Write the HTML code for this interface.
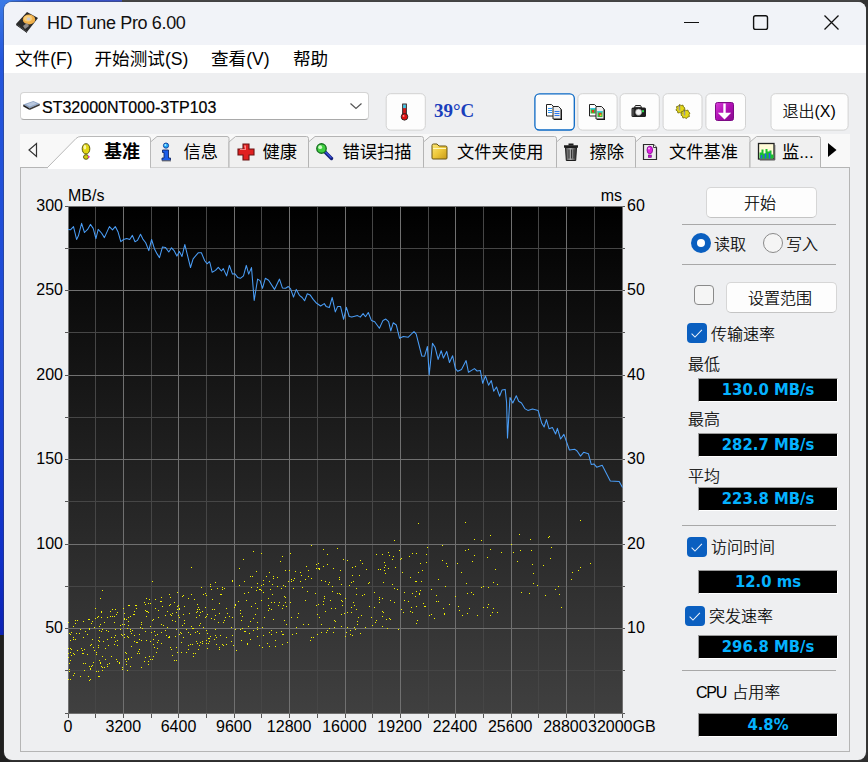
<!DOCTYPE html>
<html lang="zh-CN">
<head>
<meta charset="utf-8">
<title>HD Tune Pro 6.00</title>
<style>
*{box-sizing:border-box;margin:0;padding:0}
html,body{width:868px;height:762px;overflow:hidden}
body{position:relative;background:#2b2b2b;font-family:"Liberation Sans","Noto Sans CJK SC",sans-serif;color:#000;font-size:16px;line-height:1}
.abs{position:absolute}
.desk-top{left:0;top:0;width:868px;height:6px;background:#454545}
.desk-blue-top{left:0;top:0;width:122px;height:8px;background:linear-gradient(90deg,#3f86ea 0,#2f58d6 30px,#3a4fc0 122px)}
.desk-blue-left{left:0;top:0;width:10px;height:635px;background:linear-gradient(180deg,#3b7be6 0,#2456dc 60px,#1d49d6 320px,#1030c8 560px,#0c22b4 634px)}
.desk-dark-left{left:0;top:635px;width:10px;height:127px;background:#1f1f1f}
.desk-right{left:860px;top:0;width:8px;height:762px;background:#333}
.desk-bottom{left:0;top:752px;width:868px;height:10px;background:#2e2e2e}
.win{left:4px;top:2px;width:862px;height:758px;border-radius:8px;background:#eeeff1;overflow:hidden;box-shadow:0 0 0 1px rgba(60,60,60,.35)}
.titlebar{left:0;top:0;width:862px;height:43px;background:#f1f3f8}
.title{left:43px;top:12px;font-size:18px;letter-spacing:-0.35px;white-space:nowrap;color:#111}
.menubar{left:0;top:43px;width:862px;height:28px;background:#fff}
.menu{top:49px;font-size:17.6px;white-space:nowrap}
.t16{font-size:16px;white-space:nowrap;font-weight:300;-webkit-text-stroke:.22px #000}
.combo{left:16px;top:90px;width:349px;height:28px;background:#fff;border:1px solid #d4d4d4;border-bottom-color:#a9a9a9;border-radius:4px}
.btn{background:#fdfdfd;border:1px solid #d6d6d6;border-bottom-color:#c4c4c4;border-radius:5px}
.btn.focus{border:1px solid #0a68c4;box-shadow:inset 0 0 0 .5px #0a68c4}
.temp{left:430px;top:99px;font-family:"Liberation Serif",serif;font-weight:bold;font-size:19px;color:#1a3ebc;white-space:nowrap}
.tabstrip{left:16px;top:132px;width:830px;height:33px;background:#f8f8f8}
.tab{top:135px;height:30px;background:#f0f0f0;border:1px solid #c9c9c9;border-bottom:none;border-radius:5px 5px 0 0}
.tablabel{top:141.500px;font-size:17.300px;white-space:nowrap}
.panel{left:16px;top:165px;width:830px;height:585px;border:1px solid #b5b5b5;background:#eeeff1}
.sep{left:678px;width:154px;height:1px;background:#a8a8a8}
.box{left:694px;width:140px;height:24px;background:#000;border:1px solid #9a9a9a;border-right-color:#fff;border-bottom-color:#fff;color:#05b2ff;font-family:"DejaVu Sans Condensed","DejaVu Sans","Liberation Sans",sans-serif;font-stretch:condensed;font-weight:bold;font-size:16.5px;text-align:center;line-height:22px;letter-spacing:0;white-space:nowrap}
.cb{width:20px;height:20px;border-radius:4px;background:#0a5fc0}
.cb svg{position:absolute;left:0;top:0}
.cb.off{background:#f5f5f5;border:1px solid #8a8a8a}
.radio{width:20px;height:20px;border-radius:50%}
.radio.on{background:#0a5fc0}
.radio.on::after{content:"";position:absolute;left:6px;top:6px;width:8px;height:8px;border-radius:50%;background:#fff}
.radio.off{background:#f5f5f5;border:1px solid #8a8a8a}
.chart{position:absolute;left:-4px;top:-2px}
</style>
</head>
<body>
<div class="abs desk-top"></div>
<div class="abs desk-right"></div>
<div class="abs desk-bottom"></div>
<div class="abs desk-blue-top"></div>
<div class="abs desk-blue-left"></div>
<div class="abs desk-dark-left"></div>

<div class="abs win">
  <div class="abs titlebar"></div>
  <!-- app icon -->
  <svg class="abs" style="left:11px;top:9px" width="24" height="22" viewBox="0 0 24 22">
    <polygon points="1,13 12,1 23,7 12,21" fill="#2a2a2a"/>
    <polygon points="1,13 12,21 12,22 1,14" fill="#111"/>
    <ellipse cx="14" cy="8.5" rx="6.2" ry="5" fill="#f0b04a"/>
    <ellipse cx="13" cy="7.5" rx="4" ry="3" fill="#f8cf7c"/>
    <ellipse cx="13.5" cy="8" rx="1.8" ry="1.4" fill="#c9c9d4"/>
    <polygon points="8,15 12,12 14,15 10,18" fill="#8e8a88"/>
  </svg>
  <div class="abs title">HD Tune Pro 6.00</div>
  <!-- caption buttons -->
  <svg class="abs" style="left:676px;top:10px" width="170" height="24" viewBox="0 0 170 24">
    <path d="M4 10.5H19" stroke="#111" stroke-width="1.2" fill="none"/>
    <rect x="73.600" y="3.700" width="13.900" height="13.700" rx="2" fill="none" stroke="#111" stroke-width="1.400"/>
    <path d="M144.5 3.5L158.5 17.5M158.5 3.5L144.5 17.5" stroke="#111" stroke-width="1.3" fill="none"/>
  </svg>

  <div class="abs menubar"></div>
  <div class="abs menu" style="left:11px">文件(F)</div>
  <div class="abs menu" style="left:90.5px">开始测试(S)</div>
  <div class="abs menu" style="left:207px">查看(V)</div>
  <div class="abs menu" style="left:289px">帮助</div>

  <!-- combobox -->
  <div class="abs combo"></div>
  <svg class="abs" style="left:18px;top:98px" width="19" height="11" viewBox="0 0 20 12">
    <polygon points="1,5 12,1 19,4 8,9" fill="#8fa4c4"/>
    <polygon points="1,5 8,9 8,11 1,7" fill="#222"/>
    <polygon points="8,9 19,4 19,6 8,11" fill="#3a3a3a"/>
    <polygon points="4,5 12,2 16,4 8,7" fill="#b9c8de"/>
  </svg>
  <div class="abs t16" style="left:38px;top:97.5px">ST32000NT000-3TP103</div>
  <svg class="abs" style="left:344px;top:99px" width="16" height="10" viewBox="0 0 16 10"><path d="M2.500 2.500L8 7.500L13.500 2.500" stroke="#555" stroke-width="1.2" fill="none"/></svg>

  <svg class="chart" width="868" height="762" viewBox="0 0 868 762">
<rect x="386.2" y="93.7" width="39.1" height="36.4" rx="4.5" fill="#fdfdfd" stroke="#d2d2d2" stroke-width="1"/>
<rect x="534.9" y="93.8" width="39.4" height="36.2" rx="4.5" fill="#fdfdfd" stroke="#0a68c4" stroke-width="1.3"/>
<rect x="577.9" y="93.7" width="39.2" height="36.4" rx="4.5" fill="#fdfdfd" stroke="#d2d2d2" stroke-width="1"/>
<rect x="620.1" y="93.7" width="39.2" height="36.4" rx="4.5" fill="#fdfdfd" stroke="#d2d2d2" stroke-width="1"/>
<rect x="663.1" y="93.7" width="38.9" height="36.4" rx="4.5" fill="#fdfdfd" stroke="#d2d2d2" stroke-width="1"/>
<rect x="705.9" y="93.7" width="39.6" height="36.4" rx="4.5" fill="#fdfdfd" stroke="#d2d2d2" stroke-width="1"/>
<rect x="771.0" y="93.7" width="77.1" height="36.4" rx="4.5" fill="#fdfdfd" stroke="#d2d2d2" stroke-width="1"/>
</svg>
  <!-- thermometer button -->
  <svg class="abs" style="left:395px;top:100.5px" width="11" height="18.5" viewBox="0 0 12 20">
    <rect x="4" y="1" width="4" height="13" fill="#d01818" stroke="#222" stroke-width="1"/>
    <rect x="4.5" y="1.5" width="3" height="4" fill="#3cc8e8"/>
    <circle cx="6" cy="15" r="3.6" fill="#e01010" stroke="#222" stroke-width="1"/>
    <circle cx="5" cy="14" r="1" fill="#ff9a9a"/>
  </svg>
  <div class="abs temp">39°C</div>

  <!-- toolbar buttons -->
  <div class="abs t16" style="left:778.5px;top:102px">退出<span style="-webkit-text-stroke:0">(X)</span></div>
  <!-- copy text icon -->
  <svg class="abs" style="left:541px;top:101px" width="18" height="18" viewBox="0 0 18 18">
    <path d="M9.500 4.500h5l2.500 2.500v10h-8z" fill="#111"/>
    <path d="M1.500 1.500h5l2 2v9.500h-7z" fill="#fff" stroke="#222" stroke-width="1"/>
    <path d="M3 5.500h4M3 7.500h4M3 9.500h4" stroke="#2a94f4" stroke-width="1.200"/>
    <path d="M8 3.500h5.500l2.500 2.500v10h-8z" fill="#ececec" stroke="#222" stroke-width="1"/>
    <path d="M9.500 8.500h5M9.500 10.500h5M9.500 12.500h5" stroke="#2a78f0" stroke-width="1.200"/>
  </svg>
  <!-- copy image icon -->
  <svg class="abs" style="left:584px;top:101px" width="18" height="18" viewBox="0 0 18 18">
    <path d="M9.500 4.500h5l2.500 2.500v10h-8z" fill="#111"/>
    <path d="M1.500 1.500h5l2 2v9.500h-7z" fill="#fff" stroke="#222" stroke-width="1"/>
    <rect x="2.500" y="5" width="5" height="5.500" fill="#38b838"/>
    <rect x="2.500" y="5" width="5" height="1.500" fill="#38c8e8"/>
    <rect x="4" y="7" width="2" height="2.500" fill="#e83020"/>
    <path d="M8 3.500h5.500l2.500 2.500v10h-8z" fill="#ececec" stroke="#222" stroke-width="1"/>
    <rect x="9.500" y="8" width="5" height="6" fill="#38b838"/>
    <rect x="9.500" y="8" width="5" height="1.500" fill="#38c8e8"/>
    <rect x="11" y="10" width="2.200" height="2.500" fill="#e83020"/>
    <rect x="12" y="11.500" width="1.500" height="1.500" fill="#e8d820"/>
  </svg>
  <!-- camera icon -->
  <svg class="abs" style="left:627px;top:102px" width="16" height="14" viewBox="0 0 16 14">
    <path d="M4.500 1.500h5l1.200 2.200h-7.400z" fill="#e8e8e8" stroke="#222" stroke-width="1"/>
    <rect x=".5" y="3.500" width="14.500" height="9.500" rx="1.500" fill="#1f1f1f"/>
    <rect x="1" y="5" width="2.200" height="7" fill="#444"/>
    <circle cx="7.600" cy="8.200" r="3.100" fill="#f4f4f4"/>
    <circle cx="7.600" cy="8.200" r="3.100" fill="none" stroke="#888" stroke-width=".6"/>
    <rect x="11" y="6.200" width="2" height="2" fill="#28d848"/>
  </svg>
  <!-- options icon -->
  <svg class="abs" style="left:669px;top:101px" width="18" height="17" viewBox="0 0 18 17">
    <g fill="#e4d812" stroke="#7a7410" stroke-width=".9">
      <path d="M6.500 1.500l1.600 1 1.900-.4.400 1.900 1.600 1-1 1.700.4 1.900-1.900.4-1 1.600-1.700-1-1.900.4-.4-1.900-1.600-1 1-1.600-.4-1.900 1.900-.4z"/>
      <path d="M11.500 6.500l1.600 1 1.900-.4.400 1.900 1.600 1-1 1.700.4 1.900-1.900.4-1 1.600-1.700-1-1.900.4-.4-1.900-1.600-1 1-1.600-.4-1.900 1.900-.4z"/>
    </g>
    <path d="M6.500 2.500v5" stroke="#9a9a9a" stroke-width="1.600"/>
    <path d="M11.500 7.500v5" stroke="#9a9a9a" stroke-width="1.600"/>
    <path d="M6.500 2v1.500M11.500 7v1.500" stroke="#555" stroke-width=".8"/>
  </svg>
  <!-- download icon -->
  <svg class="abs" style="left:711px;top:100px" width="19" height="19" viewBox="0 0 19 19">
    <defs><linearGradient id="pg" x1="0" y1="0" x2="1" y2="1"><stop offset="0" stop-color="#d83cd8"/><stop offset=".5" stop-color="#b010b4"/><stop offset="1" stop-color="#86088c"/></linearGradient></defs>
    <rect x=".5" y=".5" width="18" height="18" rx="2" fill="url(#pg)" stroke="#7c0a84"/>
    <path d="M9.500 1.500v10" stroke="#fff" stroke-width="2.400" fill="none"/>
    <path d="M2.800 10.800h13.400l-6.700 6.700z" fill="#fff"/>
  </svg>

  <!-- tab strip -->
  <div class="abs tabstrip"></div>
  <svg class="abs" style="left:21.5px;top:139px" width="14" height="18" viewBox="0 0 14 18"><path d="M10.5 2.5v13l-7.5-6.5z" fill="none" stroke="#333" stroke-width="1.2"/></svg>
  <svg class="abs" style="left:821px;top:139px" width="14" height="18" viewBox="0 0 14 18"><path d="M3 2v14l8.5-7z" fill="#000"/></svg>


  <div class="abs panel"></div>
  <svg class="chart" width="868" height="762" viewBox="0 0 868 762">
<path d="M150.5 167.5V142L157.0 136.5H227Q229 136.5 229 138.5V167.5" fill="#f0f0f0" stroke="#b4b4b4" stroke-width="1"/>
<path d="M229 167.5V142L235.5 136.5H306.5Q308.5 136.5 308.5 138.5V167.5" fill="#f0f0f0" stroke="#b4b4b4" stroke-width="1"/>
<path d="M308.5 167.5V142L315.0 136.5H421.5Q423.5 136.5 423.5 138.5V167.5" fill="#f0f0f0" stroke="#b4b4b4" stroke-width="1"/>
<path d="M423.5 167.5V142L430.0 136.5H554.5Q556.5 136.5 556.5 138.5V167.5" fill="#f0f0f0" stroke="#b4b4b4" stroke-width="1"/>
<path d="M556.5 167.5V142L563.0 136.5H633.5Q635.5 136.5 635.5 138.5V167.5" fill="#f0f0f0" stroke="#b4b4b4" stroke-width="1"/>
<path d="M635.5 167.5V142L642.0 136.5H748Q750 136.5 750 138.5V167.5" fill="#f0f0f0" stroke="#b4b4b4" stroke-width="1"/>
<path d="M750 167.5V142L756.5 136.5H818.5Q820.5 136.5 820.5 138.5V167.5" fill="#f0f0f0" stroke="#b4b4b4" stroke-width="1"/>
<path d="M44 167.500H47.500L76 138.500Q78 136.500 81 136.500H148Q150.500 136.500 150.500 139V167.500" fill="#fff" stroke="#b9b9b9" stroke-width="1"/>
<rect x="48" y="167" width="102" height="2" fill="#fff"/>
</svg>

  <!-- tab icons -->
  <svg class="abs" style="left:77px;top:141px" width="12" height="17" viewBox="0 0 12 17">
    <path d="M5 .7C7.500 .7 8.800 3 8.800 5.800C8.800 8.400 7.500 11 5 11C2.500 11 1.200 8.400 1.200 5.800C1.200 3 2.500 .7 5 .7z" fill="#e2d614" stroke="#5e5a10" stroke-width="1"/>
    <ellipse cx="3.900" cy="4.200" rx="1.300" ry="2.200" fill="#fbf8a8"/>
    <ellipse cx="5" cy="14" rx="2.500" ry="2.300" fill="#d8cc14" stroke="#5e5a10" stroke-width="1"/>
    <rect x="7" y="13" width="1.600" height="1.600" fill="#e828c8"/>
  </svg>
  <svg class="abs" style="left:156px;top:140px" width="12" height="20" viewBox="0 0 12 20">
    <circle cx="6" cy="3.600" r="2.600" fill="#20a8f8" stroke="#123a9a" stroke-width=".9"/>
    <circle cx="5.400" cy="3" r="1" fill="#a8ecff"/>
    <path d="M2.500 8h6v8h2v2.500h-8.500v-2.500h2v-5.500h-1.500z" fill="#1e5ee8" stroke="#142a6a" stroke-width=".9"/>
    <path d="M2 19h9" stroke="#8a8a8a" stroke-width="1"/>
  </svg>
  <svg class="abs" style="left:233px;top:141px" width="18" height="18" viewBox="0 0 18 18">
    <path d="M6 1h6v5h5v6h-5v5h-6v-5h-5v-6h5z" fill="#e02020" stroke="#6a1414" stroke-width="1.100"/>
    <path d="M7 2.500h2v4.500h-6v-1h5z" fill="#ff9a9a" opacity=".85"/>
  </svg>
  <svg class="abs" style="left:311px;top:140px" width="20" height="20" viewBox="0 0 20 20">
    <path d="M9.500 9.500L16.500 16.500" stroke="#14207a" stroke-width="3.400" stroke-linecap="round"/>
    <path d="M9.500 9L16 15.500" stroke="#3a50e0" stroke-width="1.200" stroke-linecap="round"/>
    <circle cx="6.500" cy="6.500" r="4.700" fill="#40d040" stroke="#14701e" stroke-width="1.400"/>
    <circle cx="5.200" cy="5.200" r="1.900" fill="#d0fcc8"/>
  </svg>
  <svg class="abs" style="left:427px;top:141px" width="17" height="17" viewBox="0 0 17 17">
    <defs><linearGradient id="fg" x1="0" y1="0" x2="1" y2="1"><stop offset="0" stop-color="#fbe87a"/><stop offset=".5" stop-color="#eec83a"/><stop offset="1" stop-color="#c89a18"/></linearGradient></defs>
    <path d="M1 2.500Q1 1 2.500 1H6L8 3H14.500Q16 3 16 4.500V15Q16 16 15 16H2Q1 16 1 15z" fill="url(#fg)" stroke="#6a5410" stroke-width="1"/>
    <path d="M2 5.500H15" stroke="#fff6b8" stroke-width="1.200"/>
  </svg>
  <svg class="abs" style="left:559px;top:140px" width="16" height="20" viewBox="0 0 16 20">
    <defs><linearGradient id="tg" x1="0" y1="0" x2="1" y2="0"><stop offset="0" stop-color="#4a4a4a"/><stop offset=".45" stop-color="#a8a8a8"/><stop offset="1" stop-color="#2e2e2e"/></linearGradient></defs>
    <path d="M2.500 5.500h11l-.8 13h-9.400z" fill="url(#tg)" stroke="#1c1c1c" stroke-width="1"/>
    <path d="M1 4.500h14" stroke="#1c1c1c" stroke-width="2.400"/>
    <path d="M5.500 2.500h5" stroke="#1c1c1c" stroke-width="1.800"/>
    <path d="M6 7.500v9M8.500 7.500v9M11 7.500v9" stroke="#2a2a2a" stroke-width=".9"/>
  </svg>
  <svg class="abs" style="left:638px;top:141px" width="18" height="18" viewBox="0 0 18 18">
    <path d="M1.500 1.500h10l3 3v12h-13z" fill="#ececec" stroke="#2a2a2a" stroke-width="1.200"/>
    <path d="M11.500 1.500v3h3" fill="#fff" stroke="#2a2a2a" stroke-width=".9"/>
    <ellipse cx="7.800" cy="7" rx="2.800" ry="3.800" fill="#e020e0" stroke="#7a0a8a" stroke-width=".8"/>
    <circle cx="7" cy="5.600" r="1" fill="#fbb8fb"/>
    <rect x="6.300" y="12" width="3" height="2.400" fill="#c010c8" stroke="#7a0a8a" stroke-width=".6"/>
  </svg>
  <svg class="abs" style="left:753px;top:140px" width="20" height="20" viewBox="0 0 20 20">
    <rect x="1.500" y="1.500" width="15.500" height="15.500" fill="#fffbd8" stroke="#222" stroke-width="1.300"/>
    <path d="M3.500 16.500v-6M5.500 16.500v-9M7.500 16.500v-5M9.500 16.500v-9.500M11.500 16.500v-7M13.500 16.500v-8M15.500 16.500v-4" stroke="#18c030" stroke-width="2"/>
    <path d="M4.500 16.500v-3.500M8.500 16.500v-5M12.500 16.500v-5.500" stroke="#2a58f0" stroke-width="1.600"/>
    <path d="M17.800 3v15h-15" stroke="#555" stroke-width="1" fill="none"/>
  </svg>

  <!-- tab labels -->
  <div class="abs tablabel" style="left:100px;top:141px;font-size:18px;font-weight:bold">基准</div>
  <div class="abs tablabel" style="left:179.5px">信息</div>
  <div class="abs tablabel" style="left:258.5px">健康</div>
  <div class="abs tablabel" style="left:338.5px">错误扫描</div>
  <div class="abs tablabel" style="left:453px">文件夹使用</div>
  <div class="abs tablabel" style="left:585.5px">擦除</div>
  <div class="abs tablabel" style="left:665px">文件基准</div>
  <div class="abs tablabel" style="left:778px">监...</div>

  <svg class="chart" width="868" height="762" viewBox="0 0 868 762">
<defs><linearGradient id="bg" x1="0" y1="0" x2="0" y2="1"><stop offset="0" stop-color="#000"/><stop offset="1" stop-color="#404040"/></linearGradient></defs>
<rect x="68" y="206" width="555" height="508" fill="url(#bg)"/>
<path d="M95.5 206V714M151.5 206V714M206.5 206V714M261.5 206V714M317.5 206V714M372.5 206V714M428.5 206V714M483.5 206V714M538.5 206V714M594.5 206V714M68 248.5H623M68 332.5H623M68 417.5H623M68 501.5H623M68 586.5H623M68 670.5H623" stroke="#464646" stroke-width="1" fill="none" shape-rendering="crispEdges"/>
<path d="M68.5 206V714M123.5 206V714M178.5 206V714M234.5 206V714M289.5 206V714M345.5 206V714M400.5 206V714M455.5 206V714M511.5 206V714M566.5 206V714M622.5 206V714M68 206.5H623M68 290.5H623M68 375.5H623M68 459.5H623M68 544.5H623M68 628.5H623M68 713.5H623" stroke="#707070" stroke-width="1" fill="none" shape-rendering="crispEdges"/>
<path d="M65 206.5H68M623 206.5H625M65 248.5H68M623 248.5H625M65 290.5H68M623 290.5H625M65 332.5H68M623 332.5H625M65 375.5H68M623 375.5H625M65 417.5H68M623 417.5H625M65 459.5H68M623 459.5H625M65 501.5H68M623 501.5H625M65 544.5H68M623 544.5H625M65 586.5H68M623 586.5H625M65 628.5H68M623 628.5H625M65 670.5H68M623 670.5H625M65 713.5H68M623 713.5H625M68.5 714V718M95.5 714V718M123.5 714V718M151.5 714V718M178.5 714V718M206.5 714V718M234.5 714V718M261.5 714V718M289.5 714V718M317.5 714V718M345.5 714V718M372.5 714V718M400.5 714V718M428.5 714V718M455.5 714V718M483.5 714V718M511.5 714V718M538.5 714V718M566.5 714V718M594.5 714V718M622.5 714V718" stroke="#555" stroke-width="1" fill="none" shape-rendering="crispEdges"/>
<path d="M247 644.5h1M364 594.5h1M88 676.5h1M136 605.5h1M387 628.5h1M147 611.5h1M168 637.5h1M371 617.5h1M242 628.5h1M203 594.5h1M152 620.5h1M389 555.5h1M101 611.5h1M80 676.5h1M100 662.5h1M112 616.5h1M222 589.5h1M165 630.5h1M394 540.5h1M272 594.5h1M442 560.5h1M285 597.5h1M102 667.5h1M256 571.5h1M124 613.5h1M408 601.5h1M269 572.5h1M326 632.5h1M257 636.5h1M360 633.5h1M212 599.5h1M250 576.5h1M193 656.5h1M83 637.5h1M190 644.5h1M114 622.5h1M469 608.5h1M262 647.5h1M207 614.5h1M211 589.5h1M263 580.5h1M345 636.5h1M311 545.5h1M163 625.5h1M248 592.5h1M126 653.5h1M318 568.5h1M533 573.5h1M108 631.5h1M153 656.5h1M288 581.5h1M157 642.5h1M176 660.5h1M374 607.5h1M126 619.5h1M217 588.5h1M117 645.5h1M319 569.5h1M216 637.5h1M128 658.5h1M240 629.5h1M345 636.5h1M206 616.5h1M172 655.5h1M285 570.5h1M292 634.5h1M107 666.5h1M224 620.5h1M155 599.5h1M239 568.5h1M330 600.5h1M70 660.5h1M91 666.5h1M283 634.5h1M92 639.5h1M145 610.5h1M195 632.5h1M339 579.5h1M346 632.5h1M109 663.5h1M341 584.5h1M424 606.5h1M382 611.5h1M354 627.5h1M77 620.5h1M316 568.5h1M184 623.5h1M337 548.5h1M317 614.5h1M68 679.5h1M274 602.5h1M267 643.5h1M206 643.5h1M466 583.5h1M226 644.5h1M329 582.5h1M376 620.5h1M343 559.5h1M317 634.5h1M257 629.5h1M297 617.5h1M102 670.5h1M218 622.5h1M551 547.5h1M393 556.5h1M128 625.5h1M321 580.5h1M425 606.5h1M130 631.5h1M282 644.5h1M235 604.5h1M198 607.5h1M238 601.5h1M300 572.5h1M193 628.5h1M446 563.5h1M347 612.5h1M342 605.5h1M149 599.5h1M146 640.5h1M481 587.5h1M275 646.5h1M223 645.5h1M95 618.5h1M174 660.5h1M492 612.5h1M255 603.5h1M243 559.5h1M590 563.5h1M282 608.5h1M404 600.5h1M501 552.5h1M205 617.5h1M214 619.5h1M197 609.5h1M436 601.5h1M382 616.5h1M205 593.5h1M388 552.5h1M349 585.5h1M90 669.5h1M188 645.5h1M209 641.5h1M74 673.5h1M240 610.5h1M103 641.5h1M422 570.5h1M295 571.5h1M241 620.5h1M269 632.5h1M71 632.5h1M323 549.5h1M117 640.5h1M148 603.5h1M128 605.5h1M177 592.5h1M335 608.5h1M188 632.5h1M136 608.5h1M90 679.5h1M532 564.5h1M415 581.5h1M315 593.5h1M339 577.5h1M321 632.5h1M139 639.5h1M350 630.5h1M351 607.5h1M104 667.5h1M519 534.5h1M183 637.5h1M88 619.5h1M131 646.5h1M416 606.5h1M313 637.5h1M241 640.5h1M409 556.5h1M141 667.5h1M69 663.5h1M192 644.5h1M202 611.5h1M290 553.5h1M379 597.5h1M92 665.5h1M100 598.5h1M178 615.5h1M239 585.5h1M71 655.5h1M193 656.5h1M374 592.5h1M214 639.5h1M555 589.5h1M383 582.5h1M148 603.5h1M259 645.5h1M104 622.5h1M127 670.5h1M417 620.5h1M244 631.5h1M271 609.5h1M85 631.5h1M365 627.5h1M68 622.5h1M70 634.5h1M170 604.5h1M225 617.5h1M128 617.5h1M415 596.5h1M561 607.5h1M182 625.5h1M197 604.5h1M261 585.5h1M161 624.5h1M137 653.5h1M174 602.5h1M153 644.5h1M357 621.5h1M124 618.5h1M176 647.5h1M283 585.5h1M146 616.5h1M301 575.5h1M122 624.5h1M416 591.5h1M412 553.5h1M169 636.5h1M89 629.5h1M124 624.5h1M184 606.5h1M264 617.5h1M75 639.5h1M263 592.5h1M285 586.5h1M327 564.5h1M327 630.5h1M276 632.5h1M69 671.5h1M235 605.5h1M99 626.5h1M418 523.5h1M431 614.5h1M259 589.5h1M177 609.5h1M375 622.5h1M341 626.5h1M340 570.5h1M71 649.5h1M275 640.5h1M83 621.5h1M350 634.5h1M270 589.5h1M184 620.5h1M347 560.5h1M251 606.5h1M90 645.5h1M95 608.5h1M445 586.5h1M490 615.5h1M379 599.5h1M244 581.5h1M98 671.5h1M75 623.5h1M296 627.5h1M152 581.5h1M139 653.5h1M474 555.5h1M472 561.5h1M465 522.5h1M520 550.5h1M337 593.5h1M382 554.5h1M251 587.5h1M401 558.5h1M68 648.5h1M91 623.5h1M384 567.5h1M260 589.5h1M325 581.5h1M116 659.5h1M172 613.5h1M269 608.5h1M150 641.5h1M126 661.5h1M398 629.5h1M382 598.5h1M208 643.5h1M114 616.5h1M572 572.5h1M210 586.5h1M316 564.5h1M190 634.5h1M531 550.5h1M98 616.5h1M126 664.5h1M334 627.5h1M443 608.5h1M145 604.5h1M318 604.5h1M416 623.5h1M215 635.5h1M160 601.5h1M438 601.5h1M210 584.5h1M122 669.5h1M145 631.5h1M170 647.5h1M384 570.5h1M462 615.5h1M219 603.5h1M180 632.5h1M467 593.5h1M341 600.5h1M271 602.5h1M70 652.5h1M134 611.5h1M352 635.5h1M169 605.5h1M84 670.5h1M77 650.5h1M457 563.5h1M93 647.5h1M222 644.5h1M149 656.5h1M283 605.5h1M201 587.5h1M97 617.5h1M206 630.5h1M362 595.5h1M79 633.5h1M558 586.5h1M412 593.5h1M134 635.5h1M216 644.5h1M136 642.5h1M227 613.5h1M323 604.5h1M240 613.5h1M280 561.5h1M376 554.5h1M155 635.5h1M102 629.5h1M128 621.5h1M153 619.5h1M550 558.5h1M384 562.5h1M404 592.5h1M284 620.5h1M344 613.5h1M148 661.5h1M73 653.5h1M354 605.5h1M266 576.5h1M122 635.5h1M162 606.5h1M351 582.5h1M154 631.5h1M172 620.5h1M420 563.5h1M70 648.5h1M438 579.5h1M215 582.5h1M386 619.5h1M488 604.5h1M102 656.5h1M161 601.5h1M390 600.5h1M206 595.5h1M202 641.5h1M202 643.5h1M379 602.5h1M291 581.5h1M262 627.5h1M199 633.5h1M154 647.5h1M530 539.5h1M513 552.5h1M347 627.5h1M271 630.5h1M352 575.5h1M382 626.5h1M128 637.5h1M232 635.5h1M137 642.5h1M141 622.5h1M416 553.5h1M90 668.5h1M235 629.5h1M421 581.5h1M261 590.5h1M226 608.5h1M94 627.5h1M483 586.5h1M223 622.5h1M98 645.5h1M490 549.5h1M212 609.5h1M369 606.5h1M296 633.5h1M199 625.5h1M146 611.5h1M161 632.5h1M131 657.5h1M101 631.5h1M316 605.5h1M269 646.5h1M114 637.5h1M128 659.5h1M368 583.5h1M429 615.5h1M83 663.5h1M170 597.5h1M248 626.5h1M272 584.5h1M200 612.5h1M341 614.5h1M389 618.5h1M117 661.5h1M468 549.5h1M353 602.5h1M231 627.5h1M176 629.5h1M517 561.5h1M232 617.5h1M426 554.5h1M83 653.5h1M115 635.5h1M298 613.5h1M131 633.5h1M208 638.5h1M339 593.5h1M130 666.5h1M294 578.5h1M487 557.5h1M285 602.5h1M497 612.5h1M199 615.5h1M186 629.5h1M135 605.5h1M467 613.5h1M175 621.5h1M130 616.5h1M170 614.5h1M278 605.5h1M257 583.5h1M511 544.5h1M331 608.5h1M110 616.5h1M394 602.5h1M282 556.5h1M252 576.5h1M93 662.5h1M219 613.5h1M269 581.5h1M419 594.5h1M101 612.5h1M334 620.5h1M261 553.5h1M319 617.5h1M161 643.5h1M112 609.5h1M105 659.5h1M210 636.5h1M458 606.5h1M427 547.5h1M400 559.5h1M257 608.5h1M99 637.5h1M253 630.5h1M324 596.5h1M250 639.5h1M493 582.5h1M401 609.5h1M319 568.5h1M141 624.5h1M487 607.5h1M101 666.5h1M150 603.5h1M157 648.5h1M420 590.5h1M127 628.5h1M101 617.5h1M192 628.5h1M196 612.5h1M188 598.5h1M224 588.5h1M157 634.5h1M232 580.5h1M73 637.5h1M122 667.5h1M449 604.5h1M306 566.5h1M134 641.5h1M167 611.5h1M345 598.5h1M219 649.5h1M91 644.5h1M268 598.5h1M289 570.5h1M282 634.5h1M209 638.5h1M177 606.5h1M571 579.5h1M68 653.5h1M197 631.5h1M191 594.5h1M357 624.5h1M358 617.5h1M548 537.5h1M521 592.5h1M124 637.5h1M318 563.5h1M488 587.5h1M356 609.5h1M279 602.5h1M99 660.5h1M247 643.5h1M179 617.5h1M273 619.5h1M281 631.5h1M250 621.5h1M359 575.5h1M82 653.5h1M311 578.5h1M290 602.5h1M133 614.5h1M124 634.5h1M98 647.5h1M98 640.5h1M253 551.5h1M220 635.5h1M351 612.5h1M179 634.5h1M325 611.5h1M96 652.5h1M380 569.5h1M99 676.5h1M545 595.5h1M231 641.5h1M123 608.5h1M447 566.5h1M91 666.5h1M390 619.5h1M284 596.5h1M191 626.5h1M444 614.5h1M229 616.5h1M116 614.5h1M580 520.5h1M431 589.5h1M233 645.5h1M397 589.5h1M121 634.5h1M263 635.5h1M150 659.5h1M342 601.5h1M158 640.5h1M177 652.5h1M76 633.5h1M153 639.5h1M355 629.5h1M388 568.5h1M461 572.5h1M578 570.5h1M293 588.5h1M444 613.5h1M177 592.5h1M333 568.5h1M178 605.5h1M119 663.5h1M481 540.5h1M395 567.5h1M196 641.5h1M293 580.5h1M256 590.5h1M70 679.5h1M403 612.5h1M411 607.5h1M134 614.5h1M169 637.5h1M286 606.5h1M360 560.5h1M206 616.5h1M110 611.5h1M418 572.5h1M99 641.5h1M483 607.5h1M148 664.5h1M423 603.5h1M369 582.5h1M221 594.5h1M145 657.5h1M477 615.5h1M232 581.5h1M171 649.5h1M245 631.5h1M286 624.5h1M242 616.5h1M361 615.5h1M495 569.5h1M215 615.5h1M129 605.5h1M257 622.5h1M362 563.5h1M141 640.5h1M291 579.5h1M151 632.5h1M140 627.5h1M220 594.5h1M219 647.5h1M455 596.5h1M69 669.5h1M100 624.5h1M89 666.5h1M416 581.5h1M84 649.5h1M302 587.5h1M392 584.5h1M332 586.5h1M257 627.5h1M353 581.5h1M176 612.5h1M102 590.5h1M214 609.5h1M92 621.5h1M124 619.5h1M139 634.5h1M183 595.5h1M142 628.5h1M277 586.5h1M324 598.5h1M107 617.5h1M181 633.5h1M125 659.5h1M311 637.5h1M328 584.5h1M200 623.5h1M399 550.5h1M194 599.5h1M89 628.5h1M89 619.5h1M189 613.5h1M152 659.5h1M158 610.5h1M69 633.5h1M111 656.5h1M287 642.5h1M321 624.5h1M305 600.5h1M263 584.5h1M537 585.5h1M490 535.5h1M493 608.5h1M356 588.5h1M465 550.5h1M207 633.5h1M120 629.5h1M206 640.5h1M271 634.5h1M117 612.5h1M75 620.5h1M165 615.5h1M205 607.5h1M183 614.5h1M236 650.5h1M268 610.5h1M166 635.5h1M471 592.5h1M529 593.5h1M73 675.5h1M434 618.5h1M191 567.5h1M207 648.5h1M226 637.5h1M175 636.5h1M549 536.5h1M198 649.5h1M119 662.5h1M195 653.5h1M268 605.5h1M107 639.5h1M543 565.5h1M200 642.5h1M114 644.5h1M473 594.5h1M181 652.5h1M167 627.5h1M81 648.5h1M197 611.5h1M193 653.5h1M188 649.5h1M74 654.5h1M412 612.5h1M246 600.5h1M80 629.5h1M68 657.5h1M144 602.5h1M150 626.5h1M559 594.5h1M392 559.5h1M125 652.5h1M300 581.5h1M132 630.5h1M383 612.5h1M199 609.5h1M108 645.5h1M73 639.5h1M426 562.5h1M197 643.5h1M138 651.5h1M87 654.5h1M111 637.5h1M310 640.5h1M442 545.5h1M234 607.5h1M394 588.5h1M106 630.5h1M70 640.5h1M253 618.5h1M333 632.5h1M158 617.5h1M340 594.5h1M96 654.5h1M120 625.5h1M196 617.5h1M144 661.5h1M419 593.5h1M85 663.5h1M181 642.5h1M155 608.5h1M98 676.5h1M352 567.5h1M323 601.5h1M356 594.5h1M497 584.5h1M335 621.5h1M244 593.5h1M273 576.5h1M410 577.5h1M222 587.5h1M139 649.5h1M105 648.5h1M115 609.5h1M96 671.5h1M127 636.5h1M303 624.5h1M402 572.5h1M474 539.5h1M255 614.5h1M257 587.5h1M73 626.5h1M215 629.5h1M277 577.5h1M533 583.5h1M94 650.5h1M186 652.5h1M249 633.5h1M107 664.5h1M323 566.5h1M385 565.5h1M355 566.5h1M436 595.5h1M87 634.5h1M305 579.5h1M308 570.5h1M179 609.5h1M171 615.5h1M182 596.5h1M378 569.5h1M211 618.5h1M327 554.5h1M199 645.5h1M179 608.5h1M580 567.5h1M115 629.5h1M146 598.5h1M203 627.5h1M410 611.5h1M115 641.5h1M169 594.5h1M329 628.5h1M161 597.5h1M291 617.5h1M385 573.5h1M307 591.5h1M148 612.5h1M372 625.5h1M82 650.5h1M261 600.5h1M332 591.5h1M273 578.5h1M366 569.5h1M156 652.5h1M100 663.5h1M99 630.5h1M308 576.5h1M281 588.5h1M89 680.5h1M130 629.5h1M308 624.5h1M459 610.5h1" stroke="#f4f400" stroke-width="1" fill="none" shape-rendering="crispEdges"/>
<polyline points="68.0,229.4 70.7,229.7 73.5,226.6 76.6,239.5 78.4,235.8 81.6,223.3 84.5,232.5 87.6,229.4 90.4,224.4 93.2,228.4 95.9,238.6 98.2,229.4 101.5,233.0 104.4,237.6 109.4,226.6 112.5,229.9 115.3,226.6 118.1,232.1 120.8,241.7 123.6,239.5 126.7,238.6 129.7,239.5 132.4,235.4 135.0,241.7 137.4,240.4 140.5,234.3 142.9,239.1 145.7,242.8 148.8,250.6 151.6,239.5 154.4,248.7 157.1,253.9 159.5,257.6 162.5,246.9 165.4,247.4 168.8,252.0 171.5,247.8 174.3,250.9 176.9,256.1 179.4,251.5 182.0,256.5 184.8,244.5 187.2,254.2 190.5,267.5 193.1,258.8 198.2,252.8 201.4,252.8 204.7,260.7 207.1,263.8 209.3,261.6 210.0,263.0 212.2,272.3 215.5,270.4 218.3,267.3 221.4,271.0 223.3,268.6 226.6,275.9 229.4,265.4 232.5,274.1 234.9,273.7 237.6,277.4 240.4,278.3 243.5,275.9 246.3,265.4 248.7,274.1 251.5,267.6 254.2,300.5 257.6,279.1 260.1,280.6 262.5,288.3 265.3,278.3 268.6,280.2 274.5,289.4 279.5,279.1 282.4,287.9 285.6,288.3 288.3,286.5 290.6,288.8 293.5,297.1 296.3,289.4 299.4,295.3 302.2,297.5 304.6,300.8 307.3,293.8 310.1,294.9 313.2,299.4 316.0,302.7 320.6,306.0 324.3,303.6 326.1,306.4 329.3,307.6 332.2,297.5 335.3,311.9 337.7,306.4 340.5,306.4 343.6,319.3 346.4,307.3 349.2,316.5 351.9,317.1 357.5,315.6 360.2,317.1 363.1,313.6 365.5,316.7 368.3,312.5 371.4,320.4 374.7,321.7 379.4,328.3 383.0,320.4 385.8,319.1 388.6,321.7 390.8,330.9 393.2,322.8 396.3,325.0 399.6,338.3 403.3,336.5 408.3,337.2 414.0,331.5 416.2,334.2 421.8,356.0 424.6,356.2 427.4,346.5 429.2,374.7 432.5,343.3 435.1,347.4 438.1,359.4 441.2,350.7 443.4,358.1 446.7,351.4 449.5,362.5 452.6,355.7 455.4,368.6 457.8,371.3 461.5,369.5 466.1,360.6 468.5,372.3 471.6,370.4 474.4,368.6 477.1,371.0 480.3,370.4 482.7,383.3 485.4,375.9 488.6,385.2 491.3,380.6 493.7,391.2 496.5,387.0 499.6,396.2 502.0,390.1 505.2,389.4 506.6,402.7 507.5,438.1 510.0,397.5 512.8,403.0 516.3,395.7 518.7,401.2 521.5,403.0 524.8,408.6 527.9,410.4 532.5,409.1 538.1,410.4 541.8,423.3 544.1,427.0 546.4,419.6 549.1,428.8 552.4,427.6 555.6,434.0 557.4,428.3 560.6,439.0 563.9,434.4 569.4,450.0 574.9,449.3 577.1,451.0 580.5,456.1 583.6,452.3 588.4,453.7 591.2,464.4 593.9,463.9 596.7,467.2 602.2,465.2 610.3,481.0 619.2,481.4 622.5,487.5" fill="none" stroke="#4a9df6" stroke-width="1.05" stroke-linejoin="round"/>
<g font-family="'Liberation Sans', sans-serif" font-size="16" fill="#000">
<text x="63" y="210.8" text-anchor="end">300</text>
<text x="63" y="295.3" text-anchor="end">250</text>
<text x="63" y="379.8" text-anchor="end">200</text>
<text x="63" y="464.3" text-anchor="end">150</text>
<text x="63" y="548.8" text-anchor="end">100</text>
<text x="63" y="633.3" text-anchor="end">50</text>
<text x="627" y="210.8">60</text>
<text x="627" y="295.3">50</text>
<text x="627" y="379.8">40</text>
<text x="627" y="464.3">30</text>
<text x="627" y="548.8">20</text>
<text x="627" y="633.3">10</text>
<text x="68" y="201">MB/s</text>
<text x="622" y="201" text-anchor="end">ms</text>
<text x="68.0" y="732" text-anchor="middle">0</text>
<text x="123.3" y="732" text-anchor="middle">3200</text>
<text x="178.5" y="732" text-anchor="middle">6400</text>
<text x="233.8" y="732" text-anchor="middle">9600</text>
<text x="289.1" y="732" text-anchor="middle">12800</text>
<text x="344.4" y="732" text-anchor="middle">16000</text>
<text x="399.6" y="732" text-anchor="middle">19200</text>
<text x="454.9" y="732" text-anchor="middle">22400</text>
<text x="510.2" y="732" text-anchor="middle">25600</text>
<text x="565.4" y="732" text-anchor="middle">28800</text>
<text x="621.8" y="732" text-anchor="middle">32000GB</text>
</g>
</svg>

  <!-- right side controls -->
  <div class="abs btn" style="left:702px;top:185px;width:111px;height:31px"></div>
  <div class="abs t16" style="left:740px;top:194px">开始</div>
  <div class="abs sep" style="top:222px"></div>
  <div class="abs radio on" style="left:687px;top:231px"></div>
  <div class="abs t16" style="left:710px;top:234.5px">读取</div>
  <div class="abs radio off" style="left:759px;top:231px"></div>
  <div class="abs t16" style="left:782px;top:234.5px">写入</div>
  <div class="abs sep" style="top:262px"></div>
  <div class="abs cb off" style="left:690px;top:283px"></div>
  <div class="abs btn" style="left:722px;top:280px;width:111px;height:31px"></div>
  <div class="abs t16" style="left:744px;top:289px">设置范围</div>

  <div class="abs cb" style="left:683px;top:321px"><svg width="20" height="20" viewBox="0 0 20 20"><path d="M4.600 10.600L8 14L14.900 6.900" stroke="#fff" stroke-opacity=".92" stroke-width="1.050" fill="none"/></svg></div>
  <div class="abs t16" style="left:707px;top:324.5px">传输速率</div>
  <div class="abs t16" style="left:684px;top:355px">最低</div>
  <div class="abs box" style="top:376px">130.0 MB/s</div>
  <div class="abs t16" style="left:684px;top:410px">最高</div>
  <div class="abs box" style="top:431px">282.7 MB/s</div>
  <div class="abs t16" style="left:684px;top:466.5px">平均</div>
  <div class="abs box" style="top:485px">223.8 MB/s</div>
  <div class="abs sep" style="top:523px"></div>
  <div class="abs cb" style="left:683px;top:535px"><svg width="20" height="20" viewBox="0 0 20 20"><path d="M4.600 10.600L8 14L14.900 6.900" stroke="#fff" stroke-opacity=".92" stroke-width="1.050" fill="none"/></svg></div>
  <div class="abs t16" style="left:707px;top:537.5px">访问时间</div>
  <div class="abs box" style="top:568px">12.0 ms</div>
  <div class="abs cb" style="left:681px;top:604px"><svg width="20" height="20" viewBox="0 0 20 20"><path d="M4.600 10.600L8 14L14.900 6.900" stroke="#fff" stroke-opacity=".92" stroke-width="1.050" fill="none"/></svg></div>
  <div class="abs t16" style="left:705px;top:606.7px">突发速率</div>
  <div class="abs box" style="top:633px">296.8 MB/s</div>
  <div class="abs sep" style="top:668px"></div>
  <div class="abs t16" style="left:692px;top:682.7px"><span style="letter-spacing:-1.3px;-webkit-text-stroke:0">CPU</span><span style="margin-left:6.400px">占用率</span></div>
  <div class="abs box" style="top:711px">4.8%</div>
</div>
</body>
</html>
